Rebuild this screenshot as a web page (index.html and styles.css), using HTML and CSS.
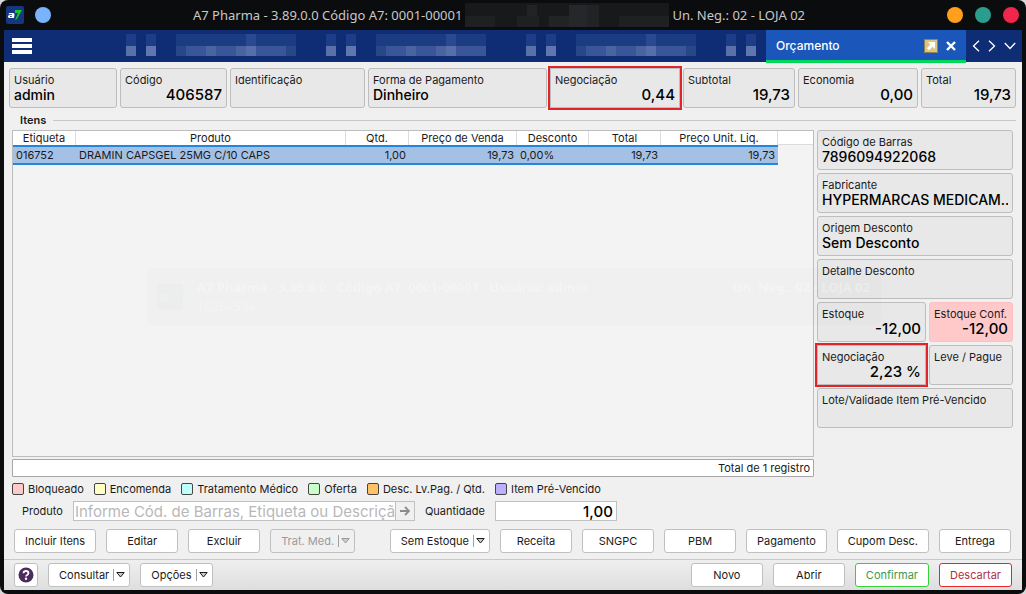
FILE: index.html
```
<!DOCTYPE html>
<html lang="pt-BR">
<head>
    <meta charset="UTF-8">
    <meta name="viewport" content="width=device-width, initial-scale=1.0">
    <title>A7 Pharma - Orçamento</title>
    <link rel="stylesheet" href="styles.css">
</head>
<body>
    <!-- Shared shapes -->
    <svg width="0" height="0" class="defs" aria-hidden="true">
        <symbol id="logo" viewBox="0 0 18 18">
            <rect width="18" height="18" rx="2" fill="#16377f"/>
            <path d="M9 4h7l-5 9-2 1 3-7H9z" fill="#12c92e"/>
            <path d="M3 7h4q2 0 1.500 2l-.5 3H3.500Q1.500 12 2 10.300 2.300 9 4 9h2q.4-.8-.4-.8H2.700zM4.300 10.100q-.8.900.2.900h1l.3-.9z" fill="#fff"/>
        </symbol>
        <symbol id="tab-icons" viewBox="0 0 30 22">
            <path d="M0 0h10v12H0zM20 0h10v12H20z" fill="#1d3e86"/>
            <path d="M0 12h10v10H0z" fill="#5a70a8"/>
            <path d="M20 12h10v10H20z" fill="#5f76ae"/>
        </symbol>
        <symbol id="tab-text" viewBox="0 0 120 22">
            <path d="M0 0h120v22H0z" fill="#1b3b83"/>
            <path d="M70 0h10v12H70z" fill="#2a4990"/>
            <path d="M10 12h50v10H10zM80 12h30v10H80z" fill="#3a5698"/>
            <path d="M30 12h10v10H30zM60 12h20v10H60z" fill="#49649f"/>
            <path d="M70 12h10v10H70z" fill="#566fa8"/>
            <path d="M0 12h10v10H0zM110 12h10v10h-10z" fill="#284789"/>
        </symbol>
        <symbol id="arrow-down" viewBox="0 0 9 6">
            <path d="M.8.500h7.400L4.500 5z" fill="#ccc" stroke="currentColor"/>
        </symbol>
    </svg>

    <div class="window">
        <header class="titlebar">
            <div class="titlebar-side">
                <svg width="18" height="18"><use href="#logo"/></svg>
                <span class="dot dot-blue"></span>
            </div>
            <div class="title">
                <span>A7 Pharma - 3.89.0.0 Código A7: 0001-00001</span>
                <svg width="204" height="24" aria-hidden="true">
                    <rect width="204" height="24" fill="#18191b"/>
                    <path d="M0 13h30v11H0zM52 13h22v11H52zM154 13h50v11h-50z" fill="#1f2022"/>
                    <path d="M62 2h10v11H62zM84 13h20v11H84zM122 2h12v22h-12z" fill="#222325"/>
                    <path d="M104 2h18v22h-18z" fill="#26272a"/>
                </svg>
                <span>Un. Neg.: 02 - LOJA 02</span>
            </div>
            <div class="window-buttons">
                <button class="dot dot-orange" aria-label="Minimizar"></button>
                <button class="dot dot-teal" aria-label="Maximizar"></button>
                <button class="dot dot-red" aria-label="Fechar janela"></button>
            </div>
        </header>

        <nav class="tabs">
            <button class="menu" aria-label="Menu">
                <svg width="20" height="16"><path d="M0 2h20M0 8h20M0 14h20" stroke="#fff" stroke-width="4"/></svg>
            </button>
            <button class="tab tab-first" aria-label="Aba 1">
                <svg width="30" height="22"><use href="#tab-icons"/></svg>
            </button>
            <button class="tab" aria-label="Aba 2">
                <svg width="120" height="22"><use href="#tab-text"/></svg>
                <svg width="30" height="22"><use href="#tab-icons"/></svg>
            </button>
            <button class="tab" aria-label="Aba 3">
                <svg width="110" height="22" viewBox="0 0 110 22"><use href="#tab-text" width="120" height="22"/></svg>
                <svg width="30" height="22"><use href="#tab-icons"/></svg>
            </button>
            <button class="tab" aria-label="Aba 4">
                <svg width="120" height="22"><use href="#tab-text"/></svg>
                <svg width="30" height="22"><use href="#tab-icons"/></svg>
            </button>
            <div class="tab tab-active">
                <span>Orçamento</span>
                <button aria-label="Destacar aba">
                    <svg width="14" height="14">
                        <rect x=".5" y=".5" width="13" height="13" fill="#dcc57c" stroke="#8d8258"/>
                        <path d="M4 3h7v7L8.700 7.700 5 11.300 2.800 9.200 6.400 5.500z" fill="#fff"/>
                    </svg>
                </button>
                <button aria-label="Fechar aba">
                    <svg width="10" height="10"><path d="M1 1l8 8M9 1L1 9" stroke="#fff" stroke-width="2.400"/></svg>
                </button>
            </div>
            <div class="tab-nav">
                <button aria-label="Anterior"><svg width="8" height="12"><path d="M7 .8L1.500 6 7 11.200" fill="none" stroke="#fff" stroke-width="1.300"/></svg></button>
                <button aria-label="Próxima"><svg width="8" height="12"><path d="M1 .8L6.500 6 1 11.200" fill="none" stroke="#fff" stroke-width="1.300"/></svg></button>
                <button aria-label="Lista de abas"><svg width="12" height="8"><path d="M.8 1L6 6.500 11.200 1" fill="none" stroke="#fff" stroke-width="1.300"/></svg></button>
            </div>
        </nav>

        <main class="content">
            <section class="summary">
                <label class="field">Usuário<input type="text" value="admin" readonly></label>
                <label class="field number">Código<input type="text" value="406587" readonly></label>
                <label class="field">Identificação<input type="text" value="" readonly></label>
                <label class="field">Forma de Pagamento<input type="text" value="Dinheiro" readonly></label>
                <label class="field number highlight">Negociação<input type="text" value="0,44" readonly></label>
                <label class="field number">Subtotal<input type="text" value="19,73" readonly></label>
                <label class="field number">Economia<input type="text" value="0,00" readonly></label>
                <label class="field number">Total<input type="text" value="19,73" readonly></label>
            </section>

            <h2 class="group-title">Itens</h2>

            <section class="items">
                <div class="grid-column">
                    <div class="grid">
                        <table>
                            <colgroup>
                                <col class="col-tag">
                                <col class="col-product">
                                <col class="col-qty">
                                <col class="col-price">
                                <col class="col-amount">
                                <col class="col-amount">
                                <col class="col-unit">
                                <col>
                            </colgroup>
                            <thead>
                                <tr>
                                    <th>Etiqueta</th>
                                    <th>Produto</th>
                                    <th>Qtd.</th>
                                    <th>Preço de Venda</th>
                                    <th>Desconto</th>
                                    <th>Total</th>
                                    <th>Preço Unit. Liq.</th>
                                    <td></td>
                                </tr>
                            </thead>
                            <tbody>
                                <tr>
                                    <td>016752</td>
                                    <td>DRAMIN CAPSGEL 25MG C/10 CAPS</td>
                                    <td class="right">1,00</td>
                                    <td class="right">19,73</td>
                                    <td>0,00%</td>
                                    <td class="right">19,73</td>
                                    <td class="right">19,73</td>
                                </tr>
                            </tbody>
                        </table>
                    </div>
                    <div class="grid-total">Total de 1 registro</div>
                </div>

                <aside class="details">
                    <label class="field wide">Código de Barras<input type="text" value="7896094922068" readonly></label>
                    <label class="field wide">Fabricante<input type="text" value="HYPERMARCAS MEDICAM.." readonly></label>
                    <label class="field wide">Origem Desconto<input type="text" value="Sem Desconto" readonly></label>
                    <label class="field wide">Detalhe Desconto<input type="text" value="" readonly></label>
                    <label class="field number">Estoque<input type="text" value="-12,00" readonly></label>
                    <label class="field number alert">Estoque Conf.<input type="text" value="-12,00" readonly></label>
                    <label class="field number highlight">Negociação<input type="text" value="2,23 %" readonly></label>
                    <label class="field">Leve / Pague<input type="text" value="" readonly></label>
                    <label class="field wide">Lote/Validade Item Pré-Vencido<input type="text" value="" readonly></label>
                </aside>
            </section>

            <ul class="legend">
                <li><i class="swatch blocked"></i>Bloqueado</li>
                <li><i class="swatch ordered"></i>Encomenda</li>
                <li><i class="swatch treatment"></i>Tratamento Médico</li>
                <li><i class="swatch offer"></i>Oferta</li>
                <li><i class="swatch discount"></i>Desc. Lv.Pag. / Qtd.</li>
                <li><i class="swatch expiring"></i>Item Pré-Vencido</li>
            </ul>

            <form class="entry" onsubmit="return false;">
                <label for="product">Produto</label>
                <div class="lookup">
                    <input type="text" id="product" placeholder="Informe Cód. de Barras, Etiqueta ou Descrição">
                    <button type="button" aria-label="Pesquisar">
                        <svg width="10" height="10"><path d="M0 5h9M5 1l4 4-4 4" fill="none" stroke="#8c8c8c" stroke-width="1.800"/></svg>
                    </button>
                </div>
                <label for="quantity">Quantidade</label>
                <input type="text" id="quantity" class="quantity" value="1,00">
            </form>

            <div class="actions">
                <button class="btn">Incluir Itens</button>
                <button class="btn">Editar</button>
                <button class="btn">Excluir</button>
                <button class="btn split" disabled>Trat. Med.<span class="arrow"><svg width="9" height="6"><use href="#arrow-down"/></svg></span></button>
                <button class="btn split push">Sem Estoque<span class="arrow"><svg width="9" height="6"><use href="#arrow-down"/></svg></span></button>
                <button class="btn">Receita</button>
                <button class="btn">SNGPC</button>
                <button class="btn">PBM</button>
                <button class="btn">Pagamento</button>
                <button class="btn">Cupom Desc.</button>
                <button class="btn">Entrega</button>
            </div>
        </main>

        <footer class="actions bottom">
            <button class="btn help" aria-label="Ajuda">
                <svg width="16" height="16">
                    <circle cx="8" cy="8" r="7.500" fill="#4b2a5c"/>
                    <path d="M5.500 6.300Q5.600 4 8 4t2.500 2.100Q10.500 7.300 9.200 8 8 8.600 8 9.500" fill="none" stroke="#fff" stroke-width="1.800"/>
                    <circle cx="8" cy="11.800" r="1.200" fill="#fff"/>
                </svg>
            </button>
            <button class="btn split">Consultar<span class="arrow"><svg width="9" height="6"><use href="#arrow-down"/></svg></span></button>
            <button class="btn split">Opções<span class="arrow"><svg width="9" height="6"><use href="#arrow-down"/></svg></span></button>
            <button class="btn push">Novo</button>
            <button class="btn">Abrir</button>
            <button class="btn confirm">Confirmar</button>
            <button class="btn discard">Descartar</button>
        </footer>

        <!-- Window switcher fading out over the content -->
        <div class="switcher" aria-hidden="true">
            <svg width="26" height="26"><use href="#logo"/></svg>
            <div class="switcher-text">
                <div class="switcher-title">
                    <span>A7 Pharma - 3.89.0.0</span>
                    <span>Código A7: 0001-00001</span>
                    <span>Usuário: admin</span>
                    <span class="switcher-unit">Un. Neg.: 02 - LOJA 02</span>
                </div>
                <div>1026x594</div>
            </div>
        </div>
    </div>
</body>
</html>
```

FILE: styles.css
```
* {
    box-sizing: border-box;
}

body {
    margin: 0;
    background: #d8d8d8;
    color: #1a1a1a;
    font-family: Inter, "Liberation Sans", sans-serif;
    font-size: 11px;
    line-height: 14px;
}

button,
input {
    font: inherit;
    color: inherit;
    margin: 0;
    padding: 0;
    border: 0;
    background: none;
}

svg {
    display: block;
    flex: none;
}

.defs {
    position: absolute;
}

.window {
    position: relative;
    display: flex;
    flex-direction: column;
    min-height: 100vh;
    padding: 0 4px 4px;
    border-radius: 8px;
    background: #0b0c0e;
}

/* Title bar */
.titlebar {
    display: flex;
    align-items: center;
    height: 30px;
}

.titlebar-side {
    display: flex;
    align-items: center;
    gap: 11px;
    padding-left: 2px;
}

.title {
    flex: 1;
    display: flex;
    align-items: center;
    justify-content: center;
    gap: 3px;
    color: #c8c8c8;
    font-family: "Noto Sans", sans-serif;
    font-size: 13px;
    line-height: 18px;
    white-space: nowrap;
}

.window-buttons {
    display: flex;
    gap: 12px;
    padding-right: 3px;
}

.dot {
    width: 16px;
    height: 16px;
    border-radius: 50%;
}

.dot-blue {
    background: #7ab3fb;
}

.dot-orange {
    background: #ff9f1c;
}

.dot-teal {
    background: #2a9d8f;
}

.dot-red {
    background: #f0264c;
}

/* Tabs */
.tabs {
    display: flex;
    height: 32px;
    background: #0f2d75;
}

.menu {
    padding: 0 8px;
}

.tab {
    display: flex;
    align-items: flex-start;
    justify-content: space-between;
    width: 200px;
    padding: 4px 10px 0;
}

.tab-first {
    flex: 1;
    justify-content: flex-end;
}

.tab-active {
    position: relative;
    align-items: center;
    gap: 8px;
    height: 33px;
    padding-top: 2px;
    border-bottom: 3px solid #00d957;
    background: #1b57bb;
    color: #fff;
    font-size: 12px;
    font-weight: 500;
}

.tab-active span {
    flex: 1;
}

.tab-nav {
    display: flex;
    align-items: center;
    gap: 8px;
    padding: 0 6px;
}

/* Read-only fields */
.content {
    flex: 1;
    display: flex;
    flex-direction: column;
    padding: 6px 6px 6px 5px;
    background: #f0f0f0;
}

.summary {
    display: grid;
    grid-template-columns: 108fr 107fr 135fr 179fr 130fr 112fr 120fr 95fr;
    gap: 3px;
}

.field {
    display: flex;
    flex-direction: column;
    min-width: 0;
    height: 40px;
    padding: 4px 4px 0;
    border: 1px solid #bdbdbd;
    border-radius: 3px;
    background: #e8e8e8;
    white-space: nowrap;
}

.field input {
    width: 100%;
    height: 16px;
    color: #000;
    font-size: 14px;
    font-weight: 500;
    line-height: 16px;
}

.number input {
    font-size: 15px;
    text-align: right;
}

.highlight {
    border-radius: 0;
    outline: 2px solid #e0242c;
}

.alert {
    border-color: #f8c0c0;
    background: #ffc9c9;
}

.group-title {
    display: flex;
    align-items: center;
    gap: 7px;
    margin: 5px 0 3px 11px;
    font-size: 11px;
    font-weight: 600;
    line-height: 14px;
}

.group-title::after {
    content: "";
    flex: 1;
    border-top: 1px solid #c8c8c8;
}

/* Items */
.items {
    flex: 1;
    display: grid;
    grid-template-columns: 1fr 196px;
    gap: 3px;
    padding: 0 3px;
}

.grid-column {
    display: flex;
    flex-direction: column;
    gap: 2px;
    min-width: 0;
}

.grid {
    flex: 1;
    border: 1px solid #bdbdbd;
    background: #f3f3f3;
    overflow: hidden;
}

.grid table {
    width: 100%;
    table-layout: fixed;
    border-collapse: separate;
    border-spacing: 0;
}

.col-tag,
.col-qty {
    width: 63px;
}

.col-product {
    width: 270px;
}

.col-price {
    width: 108px;
}

.col-amount {
    width: 72px;
}

.col-unit {
    width: 117px;
}

.grid th,
.grid td {
    padding: 0 3px;
    white-space: nowrap;
}

.grid th,
.grid thead td {
    height: 14px;
    border-right: 1px solid #dcdcdc;
    background: #fff;
    font-weight: 400;
}

.grid thead td {
    border-right: 0;
    border-bottom: 1px solid #dcdcdc;
}

.grid tbody td {
    height: 20px;
    border-top: 2px solid #2186dc;
    border-bottom: 2px solid #2186dc;
    background: #a4c1e5;
}

.grid .right {
    text-align: right;
}

.grid-total {
    height: 18px;
    padding: 1px 3px;
    border: 1px solid #a5a5a5;
    border-radius: 1px;
    background: #fff;
    text-align: right;
}

.details {
    display: grid;
    grid-template-columns: 109fr 84fr;
    gap: 3px;
    align-content: start;
}

.wide {
    grid-column: span 2;
}

/* Colour legend */
.legend {
    display: flex;
    gap: 10px;
    margin: 5px 3px;
    padding: 0;
    list-style: none;
}

.legend li {
    display: flex;
    align-items: center;
    gap: 4px;
}

.swatch {
    width: 12px;
    height: 12px;
    border: 1px solid #444;
    border-radius: 2px;
}

.blocked {
    background: #ffc9c9;
}

.ordered {
    background: #ffffc4;
}

.treatment {
    background: #befffb;
}

.offer {
    background: #c9ffc9;
}

.discount {
    background: #ffc266;
}

.expiring {
    background: #bdaeff;
}

/* Product entry */
.entry {
    display: flex;
    align-items: center;
    gap: 10px;
    padding-left: 13px;
}

.lookup {
    display: flex;
    width: 342px;
    height: 20px;
    border: 1px solid #c0c0c0;
}

.lookup input {
    flex: 1;
    min-width: 0;
    padding-left: 1px;
    background: #fff;
    font-size: 15px;
}

.lookup input::placeholder {
    color: #b8b8b8;
}

.lookup button {
    display: flex;
    align-items: center;
    justify-content: center;
    width: 19px;
    border-left: 1px solid #c0c0c0;
}

.quantity {
    width: 122px;
    height: 20px;
    padding: 0 3px;
    border: 1px solid #c0c0c0;
    background: #fff;
    color: #000;
    font-size: 15px;
    font-weight: 500;
    text-align: right;
}

/* Buttons */
.actions {
    display: flex;
    gap: 10px;
    padding: 8px 5px 0;
}

.btn {
    min-width: 72px;
    height: 24px;
    padding: 0 10px;
    border: 1px solid #c0c0c0;
    border-radius: 3px;
    background: #fff;
    white-space: nowrap;
}

.btn:disabled {
    background: #f0f0f0;
    color: #9a9a9a;
}

.split {
    display: flex;
    align-items: center;
    justify-content: center;
    gap: 4px;
    padding: 0 4px 0 10px;
}

.arrow {
    display: flex;
    align-items: center;
    height: 12px;
    padding-left: 2px;
    border-left: 1px solid #a0a0a0;
}

.push {
    margin-left: auto;
}

.bottom {
    padding: 3px 10px;
    border-top: 1px solid #c8c8c8;
    background: linear-gradient(#efefef, #dedede);
}

.help {
    display: flex;
    align-items: center;
    justify-content: center;
    min-width: 24px;
    padding: 0;
}

.confirm {
    border-color: #35d335;
    color: #3c9a4c;
}

.discard {
    border-color: #e8262c;
    color: #b5303c;
}

/* Window switcher */
.switcher {
    position: absolute;
    top: 268px;
    left: 146px;
    display: flex;
    align-items: center;
    gap: 14px;
    width: 735px;
    height: 57px;
    padding: 0 11px;
    border-radius: 6px;
    background: rgba(0, 0, 0, 0.01);
    color: rgba(255, 255, 255, 0.3);
    font-family: "Noto Sans", sans-serif;
    font-size: 13px;
    line-height: 19px;
    pointer-events: none;
}

.switcher svg {
    opacity: 0.01;
}

.switcher-text {
    flex: 1;
}

.switcher-title {
    display: flex;
    gap: 10px;
    font-weight: 700;
}

.switcher-unit {
    margin-left: auto;
}
```
